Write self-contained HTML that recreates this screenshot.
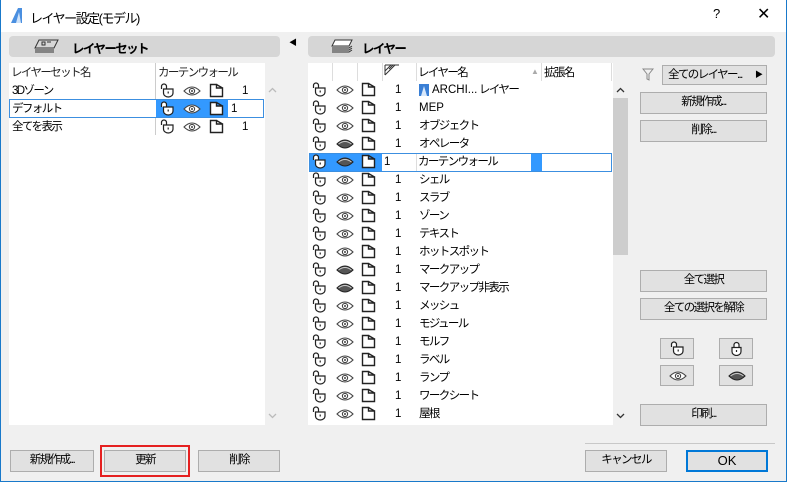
<!DOCTYPE html>
<html><head><meta charset="utf-8">
<style>
*{box-sizing:border-box;margin:0;padding:0}
body{width:787px;height:482px;overflow:hidden;background:#f0f0f0;font-family:"Liberation Sans","Noto Sans CJK JP",sans-serif;font-size:11.5px;letter-spacing:-1.6px;color:#000;position:relative}
.l{letter-spacing:0}
.a{position:absolute}
.win{position:absolute;left:0;top:0;width:787px;height:482px;border:1px solid #1979ca;border-top:none}
.title{position:absolute;left:0;top:0;width:787px;height:32px;background:#fff}
.hdr{position:absolute;background:#d6d6d6;border-radius:4px;height:21px;top:36px}
.btn{position:absolute;background:#e1e1e1;border:1px solid #adadad;text-align:center;line-height:19px}
.list{position:absolute;background:#fff}
.row{position:absolute;left:0;height:18px;line-height:18px;white-space:nowrap}
.n{position:absolute}
svg.i{position:absolute}
</style></head><body>
<svg width="0" height="0" style="position:absolute">
<defs>
<symbol id="lk" viewBox="0 0 15 15"><path d="M1.5 6 V3.5 A2.5 2.5 0 0 1 6.5 3.5 V5.5 M3.5 6 H13 V10 A4.75 4 0 0 1 3.5 10 Z" fill="#fff" stroke="#222" stroke-width="1.2"/><path d="M8.2 8.5v2" stroke="#222" stroke-width="1.2"/></symbol>
<symbol id="lkc" viewBox="0 0 15 15"><path d="M5 6.5 V4 A2.5 2.5 0 0 1 10 4 V6.5 M3 6.5 H12 V10.5 A4.5 4 0 0 1 3 10.5 Z" fill="#fff" stroke="#222" stroke-width="1.2"/><path d="M7.5 9v2" stroke="#222" stroke-width="1.2"/></symbol>
<symbol id="ey" viewBox="0 0 18 12"><path d="M1 6 Q9 -2 17 6 Q9 14 1 6 Z" fill="#fff" stroke="#444" stroke-width="1.1"/><circle cx="9" cy="6" r="2.6" fill="none" stroke="#444" stroke-width="1.1"/><circle cx="9" cy="6" r="1" fill="#444"/></symbol>
<symbol id="eyc" viewBox="0 0 18 12"><path d="M1 6 Q9 -2 17 6 Q9 14 1 6 Z" fill="#555" stroke="#222" stroke-width="1.1"/><path d="M2.5 6 Q9 1 15.5 6" fill="none" stroke="#ccc" stroke-width="1"/></symbol>
<symbol id="fd" viewBox="0 0 15 15"><path d="M1.5 1.5 H7.5 V5 H13.5 V13.5 H1.5 Z M7.5 1.5 L13.5 5" fill="#fff" stroke="#222" stroke-width="1.4"/></symbol>
</defs></svg>
<div class="title"></div>
<svg class="a" style="left:10px;top:7px" width="14" height="17" viewBox="0 0 14 17"><path d="M1 16 L8 1 H12 V16 Z" fill="#4a8fe0"/><path d="M6 16 L9 5 L11 16Z" fill="#cfe3fa"/></svg>
<div class="a" style="left:30px;top:8px;font-size:13px;letter-spacing:-1.5px">レイヤー設定(モデル)</div>
<div class="a l" style="left:713px;top:6px;font-size:13px">?</div>
<div class="a l" style="left:757px;top:4px;font-size:16px">✕</div>

<div class="hdr" style="left:9px;width:271px"></div>
<svg class="a" style="left:34px;top:39px" width="26" height="14" viewBox="0 0 26 14"><path d="M5 1 H24 L20 9 H1 Z" fill="none" stroke="#333"/><path d="M1 11 H20 M1 13 H20" stroke="#333"/><path d="M8 3h3v3h-3zM13 3h4" stroke="#333" fill="none"/></svg>
<div class="a" style="left:72px;top:38px;font-weight:bold;font-size:12.5px">レイヤーセット</div>
<div class="a l" style="left:289px;top:37px;font-size:8px">◀</div>
<div class="hdr" style="left:308px;width:467px"></div>
<svg class="a" style="left:330px;top:39px" width="24" height="14" viewBox="0 0 24 14"><path d="M5 1 H22 L19 7 H2 Z" fill="#fff" stroke="#333"/><path d="M2 9 H19 L22 7 M2 11 H19 L22 9 M2 13 H19 L22 11" stroke="#333" fill="none"/></svg>
<div class="a" style="left:362px;top:38px;font-weight:bold;font-size:12.5px">レイヤー</div>

<!-- left list -->
<div class="list" style="left:9px;top:63px;width:256px;height:362px"></div>
<div class="a" style="left:155px;top:63px;width:1px;height:72px;background:#ccc"></div>
<div class="a" style="left:11px;top:64px;color:#222">レイヤーセット名</div>
<div class="a" style="left:158px;top:64px;color:#222">カーテンウォール</div>
<div class="a" style="left:12px;top:82px;height:18px;line-height:18px">3Dゾーン</div>
<svg class="i" style="left:160px;top:83px" width="15" height="15"><use href="#lk"/></svg>
<svg class="i" style="left:183px;top:85px" width="18" height="12"><use href="#ey"/></svg>
<svg class="i" style="left:209px;top:83px" width="15" height="15"><use href="#fd"/></svg>
<div class="a" style="left:242px;top:82px;line-height:18px">1</div>
<div class="a" style="left:9px;top:99px;width:255px;height:19px;border:1px solid #3c8fe0;background:#fff"></div>
<div class="a" style="left:156px;top:100px;width:72px;height:17px;background:#3399ff"></div>
<div class="a" style="left:12px;top:100px;line-height:18px">デフォルト</div>
<svg class="i" style="left:160px;top:101px" width="15" height="15"><use href="#lk"/></svg>
<svg class="i" style="left:183px;top:103px" width="18" height="12"><use href="#ey"/></svg>
<svg class="i" style="left:209px;top:101px" width="15" height="15"><use href="#fd"/></svg>
<div class="a" style="left:231px;top:100px;line-height:18px">1</div>
<div class="a" style="left:12px;top:118px;line-height:18px">全てを表示</div>
<svg class="i" style="left:160px;top:119px" width="15" height="15"><use href="#lk"/></svg>
<svg class="i" style="left:183px;top:121px" width="18" height="12"><use href="#ey"/></svg>
<svg class="i" style="left:209px;top:119px" width="15" height="15"><use href="#fd"/></svg>
<div class="a" style="left:242px;top:118px;line-height:18px">1</div>
<svg class="a" style="left:268px;top:87px" width="9" height="6"><path d="M1 5L4.5 1.5L8 5" stroke="#bbb" fill="none" stroke-width="1.3"/></svg>
<svg class="a" style="left:268px;top:413px" width="9" height="6"><path d="M1 1L4.5 4.5L8 1" stroke="#bbb" fill="none" stroke-width="1.3"/></svg>

<div class="btn" style="left:10px;top:450px;width:84px;height:22px">新規作成...</div>
<div class="a" style="left:100px;top:445px;width:90px;height:32px;border:2px solid #e52020"></div>
<div class="btn" style="left:104px;top:450px;width:82px;height:22px">更新</div>
<div class="btn" style="left:198px;top:450px;width:82px;height:22px">削除</div>

<!-- layer list -->
<div class="list" style="left:308px;top:63px;width:305px;height:362px"></div>
<div class="a" style="left:613px;top:81px;width:15px;height:344px;background:#f0f0f0"></div>
<div class="a" style="left:613px;top:98px;width:15px;height:157px;background:#cdcdcd"></div>
<svg class="a" style="left:616px;top:87px" width="9" height="6"><path d="M1 5L4.5 1.5L8 5" stroke="#333" fill="none" stroke-width="1.3"/></svg>
<svg class="a" style="left:616px;top:413px" width="9" height="6"><path d="M1 1L4.5 4.5L8 1" stroke="#333" fill="none" stroke-width="1.3"/></svg>
<div class="a" style="left:332px;top:63px;width:1px;height:18px;background:#ddd"></div>
<div class="a" style="left:357px;top:63px;width:1px;height:18px;background:#ddd"></div>
<div class="a" style="left:382px;top:63px;width:1px;height:18px;background:#ddd"></div>
<div class="a" style="left:416px;top:63px;width:1px;height:18px;background:#ddd"></div>
<div class="a" style="left:541px;top:63px;width:1px;height:18px;background:#ddd"></div>
<div class="a" style="left:611px;top:63px;width:1px;height:18px;background:#ddd"></div>
<svg class="a" style="left:384px;top:64px" width="16" height="12" viewBox="0 0 16 12"><path d="M1 1H15M1 1V11M1 7L7 1M1 11L11 1M5 5L9 1" stroke="#333" fill="none"/></svg>
<div class="a" style="left:418px;top:64px">レイヤー名</div>
<div class="a l" style="left:531px;top:67px;font-size:8px;color:#aaa">▲</div>
<div class="a" style="left:544px;top:64px">拡張名</div>

<div class="a" style="left:309px;top:153px;width:303px;height:19px;border:1px solid #3c8fe0;background:#fff"></div>
<div class="a" style="left:310px;top:154px;width:72px;height:17px;background:#3399ff"></div>
<div class="a" style="left:531px;top:154px;width:11px;height:17px;background:#3399ff"></div>
<div class="a" style="left:416px;top:154px;width:1px;height:17px;background:#ddd"></div>

<div id="rows">
<div class="row" style="top:81px;left:308px;width:305px"><svg class="i" style="left:4px;top:1px" width="15" height="15"><use href="#lk"/></svg><svg class="i" style="left:28px;top:3px" width="18" height="12"><use href="#ey"/></svg><svg class="i" style="left:53px;top:1px" width="15" height="15"><use href="#fd"/></svg><span class="n" style="left:87px">1</span><svg class="i" style="left:111px;top:3px" width="10" height="12" viewBox="0 0 10 12"><rect width="10" height="12" fill="#3a7fd5"/><path d="M2 12 L5 2 L8 12Z" fill="#d8e8fb"/></svg><span class="n" style="left:124px"><span class="l">ARCHI...</span> レイヤー</span></div>
<div class="row" style="top:99px;left:308px;width:305px"><svg class="i" style="left:4px;top:1px" width="15" height="15"><use href="#lk"/></svg><svg class="i" style="left:28px;top:3px" width="18" height="12"><use href="#ey"/></svg><svg class="i" style="left:53px;top:1px" width="15" height="15"><use href="#fd"/></svg><span class="n" style="left:87px">1</span><span class="n l" style="left:111px">MEP</span></div>
<div class="row" style="top:117px;left:308px;width:305px"><svg class="i" style="left:4px;top:1px" width="15" height="15"><use href="#lk"/></svg><svg class="i" style="left:28px;top:3px" width="18" height="12"><use href="#ey"/></svg><svg class="i" style="left:53px;top:1px" width="15" height="15"><use href="#fd"/></svg><span class="n" style="left:87px">1</span><span class="n" style="left:111px">オブジェクト</span></div>
<div class="row" style="top:135px;left:308px;width:305px"><svg class="i" style="left:4px;top:1px" width="15" height="15"><use href="#lk"/></svg><svg class="i" style="left:28px;top:3px" width="18" height="12"><use href="#eyc"/></svg><svg class="i" style="left:53px;top:1px" width="15" height="15"><use href="#fd"/></svg><span class="n" style="left:87px">1</span><span class="n" style="left:111px">オペレータ</span></div>
<div class="row" style="top:153px;left:308px;width:305px"><svg class="i" style="left:4px;top:1px" width="15" height="15"><use href="#lk"/></svg><svg class="i" style="left:28px;top:3px" width="18" height="12"><use href="#eyc"/></svg><svg class="i" style="left:53px;top:1px" width="15" height="15"><use href="#fd"/></svg><span class="n" style="left:76px">1</span><span class="n" style="left:110px">カーテンウォール</span></div>
<div class="row" style="top:171px;left:308px;width:305px"><svg class="i" style="left:4px;top:1px" width="15" height="15"><use href="#lk"/></svg><svg class="i" style="left:28px;top:3px" width="18" height="12"><use href="#ey"/></svg><svg class="i" style="left:53px;top:1px" width="15" height="15"><use href="#fd"/></svg><span class="n" style="left:87px">1</span><span class="n" style="left:111px">シェル</span></div>
<div class="row" style="top:189px;left:308px;width:305px"><svg class="i" style="left:4px;top:1px" width="15" height="15"><use href="#lk"/></svg><svg class="i" style="left:28px;top:3px" width="18" height="12"><use href="#ey"/></svg><svg class="i" style="left:53px;top:1px" width="15" height="15"><use href="#fd"/></svg><span class="n" style="left:87px">1</span><span class="n" style="left:111px">スラブ</span></div>
<div class="row" style="top:207px;left:308px;width:305px"><svg class="i" style="left:4px;top:1px" width="15" height="15"><use href="#lk"/></svg><svg class="i" style="left:28px;top:3px" width="18" height="12"><use href="#ey"/></svg><svg class="i" style="left:53px;top:1px" width="15" height="15"><use href="#fd"/></svg><span class="n" style="left:87px">1</span><span class="n" style="left:111px">ゾーン</span></div>
<div class="row" style="top:225px;left:308px;width:305px"><svg class="i" style="left:4px;top:1px" width="15" height="15"><use href="#lk"/></svg><svg class="i" style="left:28px;top:3px" width="18" height="12"><use href="#ey"/></svg><svg class="i" style="left:53px;top:1px" width="15" height="15"><use href="#fd"/></svg><span class="n" style="left:87px">1</span><span class="n" style="left:111px">テキスト</span></div>
<div class="row" style="top:243px;left:308px;width:305px"><svg class="i" style="left:4px;top:1px" width="15" height="15"><use href="#lk"/></svg><svg class="i" style="left:28px;top:3px" width="18" height="12"><use href="#ey"/></svg><svg class="i" style="left:53px;top:1px" width="15" height="15"><use href="#fd"/></svg><span class="n" style="left:87px">1</span><span class="n" style="left:111px">ホットスポット</span></div>
<div class="row" style="top:261px;left:308px;width:305px"><svg class="i" style="left:4px;top:1px" width="15" height="15"><use href="#lk"/></svg><svg class="i" style="left:28px;top:3px" width="18" height="12"><use href="#eyc"/></svg><svg class="i" style="left:53px;top:1px" width="15" height="15"><use href="#fd"/></svg><span class="n" style="left:87px">1</span><span class="n" style="left:111px">マークアップ</span></div>
<div class="row" style="top:279px;left:308px;width:305px"><svg class="i" style="left:4px;top:1px" width="15" height="15"><use href="#lk"/></svg><svg class="i" style="left:28px;top:3px" width="18" height="12"><use href="#eyc"/></svg><svg class="i" style="left:53px;top:1px" width="15" height="15"><use href="#fd"/></svg><span class="n" style="left:87px">1</span><span class="n" style="left:111px">マークアップ非表示</span></div>
<div class="row" style="top:297px;left:308px;width:305px"><svg class="i" style="left:4px;top:1px" width="15" height="15"><use href="#lk"/></svg><svg class="i" style="left:28px;top:3px" width="18" height="12"><use href="#ey"/></svg><svg class="i" style="left:53px;top:1px" width="15" height="15"><use href="#fd"/></svg><span class="n" style="left:87px">1</span><span class="n" style="left:111px">メッシュ</span></div>
<div class="row" style="top:315px;left:308px;width:305px"><svg class="i" style="left:4px;top:1px" width="15" height="15"><use href="#lk"/></svg><svg class="i" style="left:28px;top:3px" width="18" height="12"><use href="#ey"/></svg><svg class="i" style="left:53px;top:1px" width="15" height="15"><use href="#fd"/></svg><span class="n" style="left:87px">1</span><span class="n" style="left:111px">モジュール</span></div>
<div class="row" style="top:333px;left:308px;width:305px"><svg class="i" style="left:4px;top:1px" width="15" height="15"><use href="#lk"/></svg><svg class="i" style="left:28px;top:3px" width="18" height="12"><use href="#ey"/></svg><svg class="i" style="left:53px;top:1px" width="15" height="15"><use href="#fd"/></svg><span class="n" style="left:87px">1</span><span class="n" style="left:111px">モルフ</span></div>
<div class="row" style="top:351px;left:308px;width:305px"><svg class="i" style="left:4px;top:1px" width="15" height="15"><use href="#lk"/></svg><svg class="i" style="left:28px;top:3px" width="18" height="12"><use href="#ey"/></svg><svg class="i" style="left:53px;top:1px" width="15" height="15"><use href="#fd"/></svg><span class="n" style="left:87px">1</span><span class="n" style="left:111px">ラベル</span></div>
<div class="row" style="top:369px;left:308px;width:305px"><svg class="i" style="left:4px;top:1px" width="15" height="15"><use href="#lk"/></svg><svg class="i" style="left:28px;top:3px" width="18" height="12"><use href="#ey"/></svg><svg class="i" style="left:53px;top:1px" width="15" height="15"><use href="#fd"/></svg><span class="n" style="left:87px">1</span><span class="n" style="left:111px">ランプ</span></div>
<div class="row" style="top:387px;left:308px;width:305px"><svg class="i" style="left:4px;top:1px" width="15" height="15"><use href="#lk"/></svg><svg class="i" style="left:28px;top:3px" width="18" height="12"><use href="#ey"/></svg><svg class="i" style="left:53px;top:1px" width="15" height="15"><use href="#fd"/></svg><span class="n" style="left:87px">1</span><span class="n" style="left:111px">ワークシート</span></div>
<div class="row" style="top:405px;left:308px;width:305px"><svg class="i" style="left:4px;top:1px" width="15" height="15"><use href="#lk"/></svg><svg class="i" style="left:28px;top:3px" width="18" height="12"><use href="#ey"/></svg><svg class="i" style="left:53px;top:1px" width="15" height="15"><use href="#fd"/></svg><span class="n" style="left:87px">1</span><span class="n" style="left:111px">屋根</span></div>
</div>

<!-- right controls -->
<svg class="a" style="left:642px;top:68px" width="12" height="13" viewBox="0 0 12 13"><path d="M1 1H11L7 6V12L5 11V6Z" fill="none" stroke="#888"/></svg>
<div class="btn" style="left:662px;top:65px;width:105px;height:20px;text-align:left;padding-left:5px;line-height:18px">全てのレイヤー...<span class="l" style="position:absolute;right:3px;font-size:8px">▶</span></div>
<div class="btn" style="left:640px;top:92px;width:127px;height:22px">新規作成...</div>
<div class="btn" style="left:640px;top:120px;width:127px;height:22px">削除...</div>
<div class="btn" style="left:640px;top:270px;width:127px;height:22px">全て選択</div>
<div class="btn" style="left:640px;top:298px;width:127px;height:22px">全ての選択を解除</div>
<div class="btn" style="left:660px;top:338px;width:34px;height:21px"><svg class="i" style="left:9px;top:2px" width="15" height="15"><use href="#lk"/></svg></div>
<div class="btn" style="left:719px;top:338px;width:34px;height:21px"><svg class="i" style="left:9px;top:2px" width="15" height="15"><use href="#lkc"/></svg></div>
<div class="btn" style="left:660px;top:365px;width:34px;height:21px"><svg class="i" style="left:8px;top:4px" width="18" height="12"><use href="#ey"/></svg></div>
<div class="btn" style="left:719px;top:365px;width:34px;height:21px"><svg class="i" style="left:8px;top:4px" width="18" height="12"><use href="#eyc"/></svg></div>
<div class="btn" style="left:640px;top:404px;width:127px;height:22px">印刷...</div>
<div class="a" style="left:585px;top:443px;width:190px;height:1px;background:#c8c8c8"></div>
<div class="btn" style="left:585px;top:450px;width:82px;height:22px">キャンセル</div>
<div class="btn l" style="left:686px;top:450px;width:82px;height:22px;border:2px solid #0078d7;line-height:18px;font-size:13px">OK</div>
<div class="win"></div>
</body></html>
